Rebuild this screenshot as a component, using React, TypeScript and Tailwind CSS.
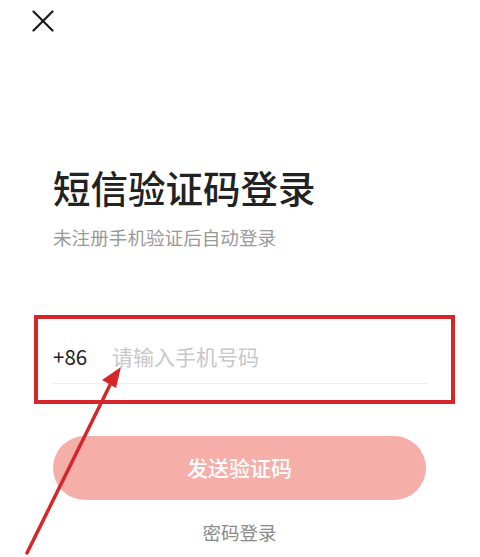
import React from 'react';

const FONT = { fontFamily: '"Noto Sans CJK SC", "Noto Sans", sans-serif' };

export default function App() {
  return (
    <div className="relative w-[480px] h-[557px] overflow-hidden bg-white" style={FONT}>
      {/* close */}
      <div className="pt-[10px] pl-[32px]">
        <svg width="22" height="22" viewBox="0 0 22 22" fill="none" stroke="#1a1a1a" strokeWidth="2.2" strokeLinecap="round">
          <line x1="1.5" y1="1.5" x2="20.5" y2="20.5" />
          <line x1="20.5" y1="1.5" x2="1.5" y2="20.5" />
        </svg>
      </div>

      <div className="px-[53px]">
        <h1 className="mt-[133px] text-[37.5px] leading-[44px] font-medium text-[#222]">短信验证码登录</h1>
        <p className="mt-[16px] text-[18.6px] leading-[24px] text-[#9a9a9a]">未注册手机验证后自动登录</p>

        <div className="mt-[85px] flex items-center h-[50px] pb-[4px] border-b border-[#eeeeee] w-[375px]">
          <span className="text-[20.5px] text-[#222] w-[59px]">+86</span>
          <span className="text-[21px] text-[#c8c8c8]">请输入手机号码</span>
        </div>

        <button className="mt-[52px] w-[373px] h-[64px] rounded-full bg-[#f5aea8] text-white text-[21px] font-medium flex items-center justify-center">
          发送验证码
        </button>

        <div className="mt-[19px] w-[373px] text-center text-[18.5px] text-[#8a8a8a]">密码登录</div>
      </div>

      {/* annotation: red box */}
      <div className="absolute left-[34px] top-[315px] w-[421px] h-[89px] border-[4px] border-[#d7262a]" />

      {/* annotation: arrow */}
      <svg className="absolute left-0 top-0" width="480" height="557" viewBox="0 0 480 557">
        <line x1="27" y1="553" x2="110" y2="385" stroke="#d7262a" strokeWidth="3.5" strokeLinecap="round" />
        <polygon points="121,367 102,380 116,388" fill="#d7262a" />
      </svg>
    </div>
  );
}
